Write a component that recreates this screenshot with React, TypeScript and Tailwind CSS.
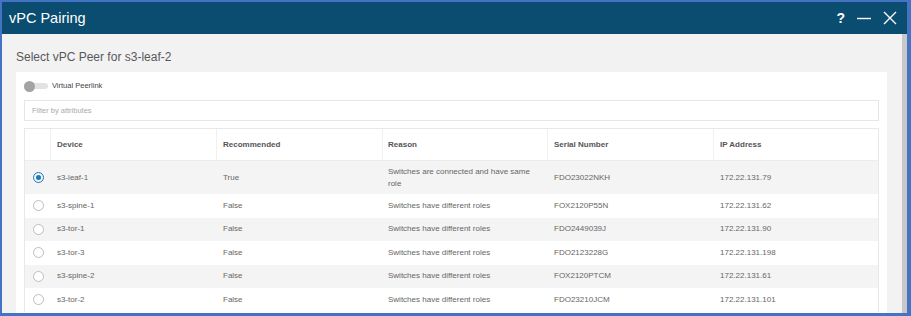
import { useState } from 'react';

interface Peer {
    device: string;
    recommended: string;
    reason: string;
    serial: string;
    ip: string;
}

const peers: Peer[] = [
    { device: 's3-leaf-1', recommended: 'True', reason: 'Switches are connected and have same role', serial: 'FDO23022NKH', ip: '172.22.131.79' },
    { device: 's3-spine-1', recommended: 'False', reason: 'Switches have different roles', serial: 'FOX2120P55N', ip: '172.22.131.62' },
    { device: 's3-tor-1', recommended: 'False', reason: 'Switches have different roles', serial: 'FDO2449039J', ip: '172.22.131.90' },
    { device: 's3-tor-3', recommended: 'False', reason: 'Switches have different roles', serial: 'FDO2123228G', ip: '172.22.131.198' },
    { device: 's3-spine-2', recommended: 'False', reason: 'Switches have different roles', serial: 'FOX2120PTCM', ip: '172.22.131.61' },
    { device: 's3-tor-2', recommended: 'False', reason: 'Switches have different roles', serial: 'FDO23210JCM', ip: '172.22.131.101' },
];

const cols = 'grid grid-cols-[26px_166px_166px_165px_166px_1fr]';

function Radio({ checked }: { checked: boolean }) {
    return checked ? (
        <span className="w-[11px] h-[11px] rounded-full border-[1.5px] border-[#1b78b8] flex items-center justify-center">
            <span className="w-[5px] h-[5px] rounded-full bg-[#1b78b8]" />
        </span>
    ) : (
        <span className="w-[11px] h-[11px] rounded-full border border-[#bdbdbd] bg-white" />
    );
}

export default function App() {
    const [selected, setSelected] = useState(0);

    return (
        <div className="w-[911px] h-[316px] bg-[#4472c4] pt-[2px] pl-[2px] pr-[4px] pb-[3px] flex flex-col font-['Liberation_Sans',Arial,sans-serif]">
            {/* Title bar */}
            <div className="h-[32px] shrink-0 bg-[#0b4d70] flex items-center justify-between pl-[7px] pr-[10px]">
                <span className="text-white text-[14.5px] leading-none">vPC Pairing</span>
                <div className="flex items-center gap-[12px] text-white">
                    <span className="text-[14px] font-bold leading-none">?</span>
                    <svg width="14" height="14" viewBox="0 0 14 14"><path d="M0 7.5h14" stroke="white" strokeWidth="1.4" /></svg>
                    <svg width="14" height="14" viewBox="0 0 14 14"><path d="M1 1l12 12M13 1L1 13" stroke="white" strokeWidth="1.4" /></svg>
                </div>
            </div>

            {/* Body */}
            <div className="flex-1 flex bg-[#f2f2f2] overflow-hidden">
                <div className="flex-1 pl-[14px] pr-[15px] pt-[16px]">
                    <div className="text-[12px] leading-[14px] text-[#58585b]">Select vPC Peer for s3-leaf-2</div>

                    <div className="mt-[8px] bg-white px-[8px] pt-[9px] h-[260px]">
                        <div className="flex items-center h-[10px]">
                            <span className="relative w-[24px] h-[6px] rounded-full bg-[#e2e2e2]">
                                <span className="absolute left-0 top-[-2.5px] w-[11px] h-[11px] rounded-full bg-[#a3a3a3]" />
                            </span>
                            <span className="ml-[4px] text-[7.5px] text-[#444]">Virtual Peerlink</span>
                        </div>

                        <div className="mt-[9px] h-[21px] border border-[#e6e6e6] flex items-center px-[7px]">
                            <span className="text-[7.5px] text-[#aaa]">Filter by attributes</span>
                        </div>

                        {/* Table */}
                        <div className="mt-[7px] border border-[#e8e8e8] border-b-0">
                            <div className={`${cols} h-[32px] text-[8px] font-bold text-[#555] border-b border-[#ececec]`}>
                                <div className="border-r border-[#f0f0f0]" />
                                <div className="flex items-center pl-[6px] border-r border-[#f0f0f0]">Device</div>
                                <div className="flex items-center pl-[6px] border-r border-[#f0f0f0]">Recommended</div>
                                <div className="flex items-center pl-[5px] border-r border-[#f0f0f0]">Reason</div>
                                <div className="flex items-center pl-[6px] border-r border-[#f0f0f0]">Serial Number</div>
                                <div className="flex items-center pl-[6px]">IP Address</div>
                            </div>
                            {peers.map((p, i) => (
                                <div
                                    key={p.device}
                                    onClick={() => setSelected(i)}
                                    className={`${cols} text-[8px] text-[#666] ${i === 0 ? 'h-[33px]' : 'h-[23.5px]'} ${i % 2 === 0 ? 'bg-[#f4f4f4]' : 'bg-white'}`}
                                >
                                    <div className="flex items-center justify-center pl-[1px]">
                                        <Radio checked={selected === i} />
                                    </div>
                                    <div className="flex items-center pl-[6px]">{p.device}</div>
                                    <div className="flex items-center pl-[6px]">{p.recommended}</div>
                                    <div className="flex items-center pl-[5px]">
                                        <span className="max-w-[150px] leading-[12px]">{p.reason}</span>
                                    </div>
                                    <div className="flex items-center pl-[6px]">{p.serial}</div>
                                    <div className="flex items-center pl-[6px]">{p.ip}</div>
                                </div>
                            ))}
                        </div>
                    </div>
                </div>
                {/* Scrollbar */}
                <div className="w-[5px] bg-[#c8c8c8]" />
            </div>
        </div>
    );
}
